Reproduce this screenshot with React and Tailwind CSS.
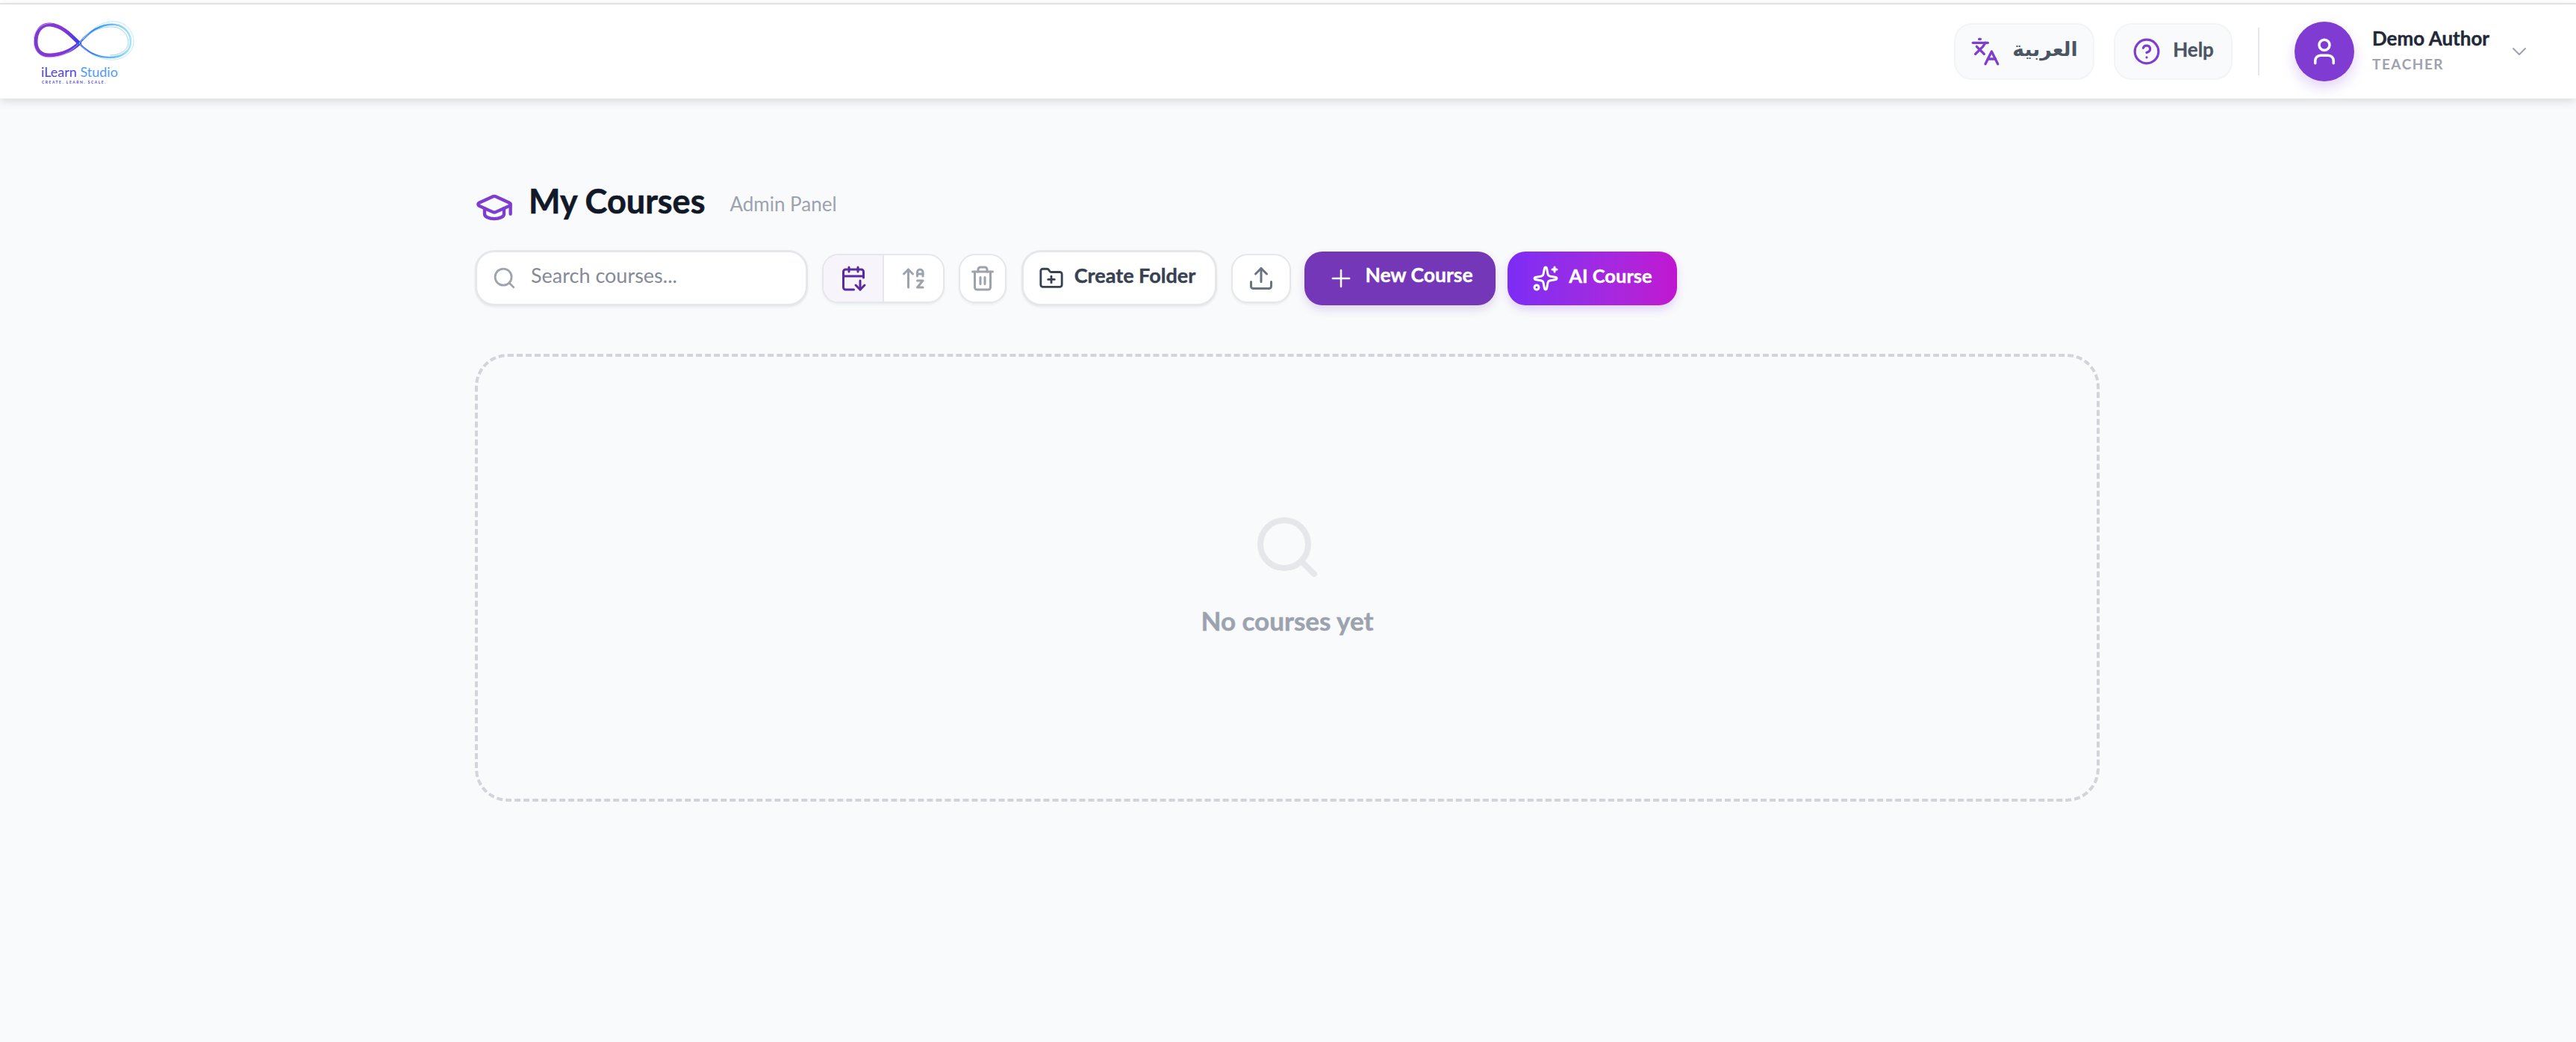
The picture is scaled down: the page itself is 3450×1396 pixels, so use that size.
import {
  ArrowUpAZ,
  CalendarArrowDown,
  ChevronDown,
  CircleHelp,
  FolderPlus,
  GraduationCap,
  Languages,
  Plus,
  Search,
  Sparkles,
  Trash2,
  Upload,
  User,
} from "lucide-react";

function Logo() {
  return (
    <div className="flex w-[136px] flex-col">
      <svg width="136" height="60" viewBox="0 0 136 60" fill="none">
        <defs>
          <linearGradient id="logoPurple" x1="0" x2="1" y1="0" y2="0">
            <stop offset="0" stopColor="#7c3bd0" />
            <stop offset="0.6" stopColor="#8a35d6" />
            <stop offset="1" stopColor="#3f3fe0" />
          </linearGradient>
          <linearGradient id="logoBlue" x1="0" x2="1" y1="0" y2="0">
            <stop offset="0" stopColor="#2f4fe8" />
            <stop offset="0.45" stopColor="#49a4f5" />
            <stop offset="1" stopColor="#a5e3fb" />
          </linearGradient>
        </defs>
        <path
          d="M61 33C50 22 38 9 22 8C9 7 3 19 3 31C3 43 11 50 23 49C38 48 50 44 61 33Z"
          stroke="url(#logoPurple)"
          strokeWidth="5"
        />
        <path
          d="M61 33C48 46 36 52 20 52C8 52 0 42 0 30C0 16 10 6 25 6"
          stroke="#cfa8f2"
          strokeWidth="0.8"
        />
        <path
          d="M61 33C71 22 83 10 101 8C118 6 130 17 130 31C130 44 118 52 102 52C85 52 71 44 61 33Z"
          stroke="url(#logoBlue)"
          strokeWidth="2.5"
        />
        <path
          d="M61 33C72 20 84 6 103 4C122 2 134 16 134 31C134 46 120 56 102 55C84 54 71 45 61 33Z"
          stroke="#a8e4fb"
          strokeWidth="0.8"
        />
        <path
          d="M66 28C76 18 86 12 102 11C116 10 126 19 127 31C127 42 116 49 102 49"
          stroke="#7fcdf8"
          strokeWidth="0.8"
        />
      </svg>
      <div className="ml-[10px] mt-[1px] whitespace-nowrap text-[18px] leading-[20px] text-[#4f46e5]">
        iLearn <span className="text-[#4f9cf5]">Studio</span>
      </div>
      <div className="ml-[11px] mt-[1px] whitespace-nowrap text-[5px] font-bold leading-[6px] tracking-[0.3em] text-[#4f46c5]">
        CREATE. LEARN. SCALE.
      </div>
    </div>
  );
}

function IconButton({ children, className }) {
  return (
    <button
      className={`flex h-[66px] items-center justify-center rounded-[22px] border-2 border-[#e5e7eb] bg-white shadow-[0_2px_3px_rgba(0,0,0,0.06)] ${className}`}
    >
      {children}
    </button>
  );
}

export default function App() {
  return (
    <div className="min-h-[1396px] bg-[#f9fafb] [font-family:Lato,'DejaVu_Sans',sans-serif]">
      <div className="h-1 bg-white" />
      <header className="flex h-[128px] items-center justify-between border-t-2 border-[#e2e2e4] bg-white pl-[45px] pr-[60px] shadow-[0_4px_12px_rgba(0,0,0,0.12)]">
        <Logo />
        <div className="flex items-center">
          <button className="flex h-[76px] w-[188px] items-center justify-center gap-[16px] rounded-[24px] border-2 border-[#f3f4f6] bg-[#f9fafb] text-[26.5px] font-bold text-[#4b5563]">
            <Languages size={40} strokeWidth={2} className="text-[#7e3cd0]" />
            <span className="mb-[6px]">العربية</span>
          </button>
          <button className="ml-[26px] flex h-[76px] w-[159px] items-center justify-center gap-[16px] rounded-[24px] border-2 border-[#f3f4f6] bg-[#f9fafb] text-[26px] font-bold text-[#4b5563] [-webkit-text-stroke:0.3px_currentColor]">
            <CircleHelp size={38} strokeWidth={2} className="text-[#7e3cd0]" />
            <span className="mb-[6px]">Help</span>
          </button>
          <div className="ml-[34px] h-[64px] w-[2px] bg-[#e5e7eb]" />
          <div className="ml-[47px] flex h-[80px] w-[80px] items-center justify-center rounded-full bg-[#803cd2] shadow-[0_8px_18px_rgba(128,60,210,0.22)]">
            <User size={42} strokeWidth={2} className="text-white" />
          </div>
          <div className="ml-[24px] flex w-[181px] flex-col pb-[6px]">
            <span className="text-[26px] font-bold leading-[34px] text-[#1f2937] [-webkit-text-stroke:0.4px_currentColor]">
              Demo Author
            </span>
            <span className="mt-[5px] text-[19px] font-bold leading-[26px] tracking-[0.08em] text-[#9ca3af]">
              TEACHER
            </span>
          </div>
          <ChevronDown size={32} strokeWidth={1.5} className="text-[#9ca3af]" />
        </div>
      </header>

      <div className="pr-[2px]">
        <main className="mx-auto w-[2176px] pt-[120px]">
          <div className="flex items-center">
            <GraduationCap size={52} strokeWidth={2} className="text-[#7e3cd0]" />
            <h1 className="ml-[20px] pb-[18px] text-[45px] font-bold leading-[34px] text-[#111827] [-webkit-text-stroke:0.6px_currentColor]">
              My Courses
            </h1>
            <span className="ml-[33px] pb-[10px] text-[26px] leading-[36px] text-[#9ca3af]">
              Admin Panel
            </span>
          </div>

          <div className="mt-[31px] flex items-center">
            <div className="flex h-[75px] w-[446px] items-center gap-[19px] rounded-[26px] border-[3px] border-[#e5e7eb] bg-white pl-[20px] shadow-[0_2px_3px_rgba(0,0,0,0.06)]">
              <Search size={33} strokeWidth={2} className="text-[#9ca3af]" />
              <span className="mb-[6px] text-[27px] text-[#858b96]">Search courses...</span>
            </div>
            <div className="ml-[19px] flex h-[66px] w-[164px] overflow-hidden rounded-[22px] border-2 border-[#e5e7eb] bg-white shadow-[0_2px_3px_rgba(0,0,0,0.06)]">
              <div className="flex w-[81px] items-center justify-center border-r-2 border-[#e5e7eb] bg-[#f7f4fc]">
                <CalendarArrowDown size={36} strokeWidth={2} className="text-[#5b2a9d]" />
              </div>
              <div className="flex flex-1 items-center justify-center">
                <ArrowUpAZ size={36} strokeWidth={2} className="text-[#9ca3af]" />
              </div>
            </div>
            <IconButton className="ml-[19px] w-[64px]">
              <Trash2 size={36} strokeWidth={2} className="text-[#9ca3af]" />
            </IconButton>
            <button className="ml-[20px] flex h-[75px] w-[262px] items-center justify-center gap-[14px] rounded-[26px] border-[3px] border-[#e5e7eb] bg-white pr-[6px] text-[27px] font-bold text-[#374151] shadow-[0_2px_3px_rgba(0,0,0,0.06)] [-webkit-text-stroke:0.4px_currentColor]">
              <FolderPlus size={34} strokeWidth={2} />
              <span className="mb-[7px]">Create Folder</span>
            </button>
            <IconButton className="ml-[19px] w-[80px]">
              <Upload size={36} strokeWidth={2} className="text-[#6b7280]" />
            </IconButton>
            <button className="ml-[18px] flex h-[72px] w-[256px] items-center justify-center gap-[13px] rounded-[24px] bg-[#7337b8] text-[26.5px] font-bold text-white shadow-[0_6px_12px_rgba(115,55,184,0.18)] [-webkit-text-stroke:0.4px_currentColor]">
              <Plus size={38} strokeWidth={1.6} />
              <span className="mb-[7px]">New Course</span>
            </button>
            <button className="ml-[16px] flex h-[72px] w-[227px] items-center justify-center gap-[13px] rounded-[24px] bg-gradient-to-r from-[#7c2cf5] to-[#c015d0] text-[25.5px] font-bold text-white shadow-[0_6px_12px_rgba(124,44,245,0.18)] [-webkit-text-stroke:0.4px_currentColor]">
              <Sparkles size={36} strokeWidth={2} />
              <span className="mb-[7px]">AI Course</span>
            </button>
          </div>

          <div className="mt-[64px] flex h-[600px] flex-col items-center justify-center rounded-[44px] border-4 border-dashed border-[#d1d5db]">
            <Search size={96} strokeWidth={2} className="mb-[10px] text-[#e5e7eb]" />
            <p className="mb-[10px] mt-[18px] text-[35px] font-bold leading-[44px] text-[#9ca3af] [-webkit-text-stroke:0.5px_currentColor]">
              No courses yet
            </p>
          </div>
        </main>
      </div>
    </div>
  );
}
